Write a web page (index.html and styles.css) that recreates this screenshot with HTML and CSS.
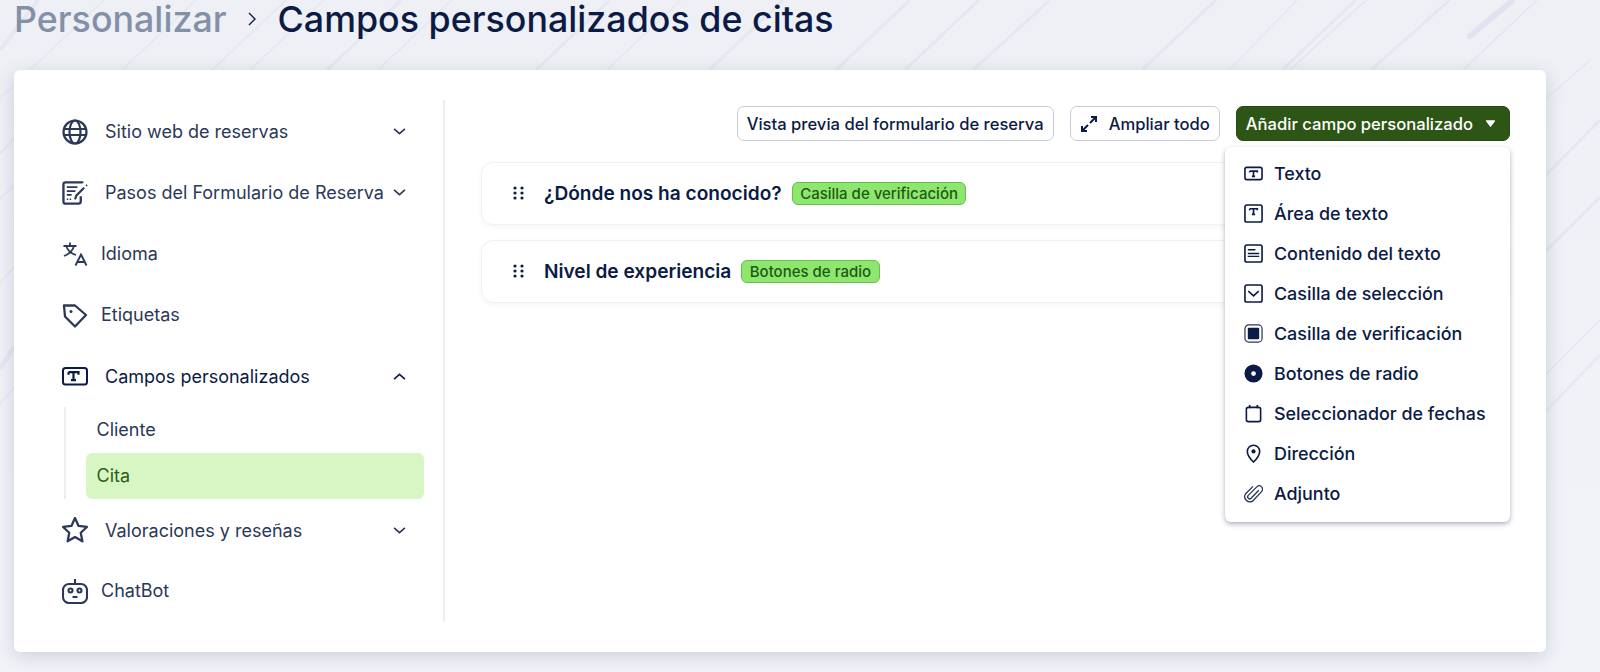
FILE: index.html
```html
<!doctype html>
<html lang="es">
<head>
    <meta charset="UTF-8">
    <title>Campos personalizados de citas</title>
    <link rel="stylesheet" href="styles.css">
</head>
<body>
    <!-- fondo con rayas diagonales -->
    <svg class="bg-lines" width="1600" height="672" viewBox="0 0 1600 672">
        <g stroke="#e5e8f2" stroke-width="3" fill="none">
            <path d="M104 0L30 70" stroke-width="1.500"/>
            <path d="M196 0L122 70" stroke-width="1.500"/>
            <path d="M286 0L212 70" stroke-width="2"/>
            <path d="M324 0L250 70" stroke-width="1.500"/>
            <path d="M401 0L327 70" stroke-width="3"/>
            <path d="M452 0L378 70" stroke-width="1.500"/>
            <path d="M610 0L536 70" stroke-width="3"/>
            <path d="M681 0L607 70" stroke-width="1.500"/>
            <path d="M783 0L709 70" stroke-width="3"/>
            <path d="M910 0L836 70"/>
            <path d="M979 0L905 70"/>
            <path d="M1050 0L973 70"/>
            <path d="M1216 0L1142 70"/>
            <path d="M1356 0L1282 70"/>
            <path d="M1366 0L1290 70" stroke-width="2"/>
            <path d="M1450 0L1371 70"/>
            <path d="M1297 0L1229 70" stroke-width="1.5"/>
            <path d="M1537 0L1463 70" stroke-width="2"/>
            <path d="M1590 60L1546 99" stroke-width="1.500"/>
            <path d="M1600 120L1546 175" stroke-width="3"/>
            <path d="M1600 197L1546 251" stroke-width="3"/>
            <path d="M1600 320L1546 374" stroke-width="1.500"/>
            <path d="M1600 355L1546 411" stroke-width="2"/>
            <path d="M38 0L0 50" stroke-width="4"/>
            <path d="M14 87L0 97" stroke-width="1.500"/>
            <path d="M14 138L0 154" stroke-width="2"/>
            <path d="M14 185L0 199" stroke-width="1.500"/>
            <path d="M14 267L0 283" stroke-width="1.500"/>
            <path d="M14 347L0 369" stroke-width="5"/>
            <path d="M14 388L0 404" stroke-width="1.500"/>
        </g>
        <path d="M1512 1L1470 36" stroke="#dfe4f0" stroke-width="6" stroke-linecap="round"/>
    </svg>

    <div class="page">
        <h1 class="crumbs">
            <span class="crumb-parent">Personalizar</span>
            <svg class="crumb-sep" width="10" height="16" viewBox="0 0 10 16"><path d="M2 2l6 6-6 6" fill="none" stroke="#0b1b45" stroke-width="1.400"/></svg>
            <span>Campos personalizados de citas</span>
        </h1>

        <div class="panel">
            <nav class="side">
                <div class="side-item">
                    <svg class="ico" viewBox="0 0 26 26"><g fill="none" stroke="#2b3858" stroke-width="2.2"><circle cx="13" cy="13" r="11.5"/><ellipse cx="13" cy="13" rx="5.5" ry="11.5"/><path d="M1.5 10h23M1.5 16h23" stroke-width="1.8"/></g></svg>
                    <span class="side-label">Sitio web de reservas</span>
                    <svg class="chev" viewBox="0 0 12 8"><path d="M1 1.5l5 4.5 5-4.5" fill="none" stroke="#2b3858" stroke-width="1.5"/></svg>
                </div>
                <div class="side-item">
                    <svg class="ico" viewBox="0 0 27 25"><g fill="none" stroke="#2b3858" stroke-width="2.400"><path d="M21 2.500V1.500H3.500Q1.500 1.500 1.500 3.500V21.500Q1.500 23.500 3.500 23.500H17Q19.500 23.500 19.500 21V16"/><path d="M5 6.500h11M5 10.500h9M5 14.500h5" stroke-width="1.800"/><path d="M13.500 19l1.500-4 8-8" stroke-width="2.200"/><path d="M25 5l1-1" stroke-width="2"/><path d="M5 19h5" stroke-dasharray="1.500 1.500" stroke-width="1.500"/></g></svg>
                    <span class="side-label">Pasos del Formulario de Reserva</span>
                    <svg class="chev" viewBox="0 0 12 8"><path d="M1 1.5l5 4.500 5-4.500" fill="none" stroke="#2b3858" stroke-width="1.500"/></svg>
                </div>
                <div class="side-item">
                    <svg class="ico" viewBox="0 0 26 26"><g fill="none" stroke="#2b3858" stroke-width="1.800"><path d="M1.500 5h13M8 1.500V5M12 5Q10 12 2 15M4.500 6Q7 12 14 14"/><path d="M13.500 24.500L19 13.500l5.500 11M15.500 21h7" stroke-width="1.900"/></g></svg>
                    <span class="side-label short">Idioma</span>
                </div>
                <div class="side-item">
                    <svg class="ico" viewBox="0 0 26 26"><g fill="none" stroke="#2b3858" stroke-width="2.300" stroke-linejoin="round"><path d="M2 2.500H13L24 12 13 23.500 3 13.500Z"/></g><circle cx="9" cy="8.500" r="1.500" fill="#2b3858"/></svg>
                    <span class="side-label short">Etiquetas</span>
                </div>
                <div class="side-item open">
                    <svg class="ico" viewBox="0 0 26 19"><rect x="1" y="1" width="24" height="16.500" rx="2.500" fill="none" stroke="#0b1b45" stroke-width="2"/><path d="M6.500 5.200h10v2.500M11.500 5.200v8M9 13.200h5M6.500 5.200v2.500" fill="none" stroke="#0b1b45" stroke-width="2.200"/></svg>
                    <span class="side-label">Campos personalizados</span>
                    <svg class="chev" viewBox="0 0 12 8"><path d="M1 6.500l5-4.500 5 4.500" fill="none" stroke="#0b1b45" stroke-width="1.500"/></svg>
                </div>
                <div class="side-sub">
                    <a class="sub-item">Cliente</a>
                    <a class="sub-item active">Cita</a>
                </div>
                <div class="side-item">
                    <svg class="ico" viewBox="1 1 24 24"><path d="M13 2l3.300 7.300 7.700.9-5.700 5.300 1.500 7.900L13 19.400 6.200 23.400l1.500-7.900L2 10.200l7.700-.9Z" fill="none" stroke="#2b3858" stroke-width="2.100" stroke-linejoin="round"/></svg>
                    <span class="side-label">Valoraciones y reseñas</span>
                    <svg class="chev" viewBox="0 0 12 8"><path d="M1 1.5l5 4.5 5-4.5" fill="none" stroke="#2b3858" stroke-width="1.5"/></svg>
                </div>
                <div class="side-item">
                    <svg class="ico" viewBox="0 0 26 26"><g fill="none" stroke="#2b3858" stroke-width="2.100"><rect x="1" y="6" width="24" height="19" rx="6"/><path d="M13 1v5"/><circle cx="8.500" cy="12.500" r="2"/><circle cx="17.500" cy="12.500" r="2"/><path d="M10.500 19h5"/></g></svg>
                    <span class="side-label short">ChatBot</span>
                </div>
            </nav>

            <main class="content">
                <div class="toolbar">
                    <button class="btn">Vista previa del formulario de reserva</button>
                    <button class="btn btn-expand">
                        <svg width="18" height="18" viewBox="0 0 18 18"><path d="M11 2h5v5M16 2l-6 6M7 16H2v-5M2 16l6-6" fill="none" stroke="#0b1b45" stroke-width="2"/></svg>
                        Ampliar todo
                    </button>
                    <div class="add-wrap">
                        <button class="btn btn-add">
                            Añadir campo personalizado
                            <svg width="11" height="7" viewBox="0 0 12 8"><path d="M1.500 1h9L6 7Z" fill="#fff" stroke="#fff" stroke-width="1.500" stroke-linejoin="round"/></svg>
                        </button>
                        <ul class="menu">
                            <li><svg class="mico" viewBox="0 0 20 20"><rect x="1" y="3.500" width="18" height="13" rx="2" fill="none" stroke="#0b1b45" stroke-width="1.700"/><path d="M6 7.500h8v1.500M10 7.500v5.500M8.300 13h3.400M6 7.500V9" fill="none" stroke="#0b1b45" stroke-width="1.800"/></svg>Texto</li>
                            <li><svg class="mico" viewBox="0 0 20 20"><rect x="1" y="1" width="18" height="18" rx="2" fill="none" stroke="#0b1b45" stroke-width="1.700"/><path d="M6 5h8v1.500M10 5v6M8.300 11h3.400M6 5v1.500" fill="none" stroke="#0b1b45" stroke-width="1.800"/></svg>Área de texto</li>
                            <li><svg class="mico" viewBox="0 0 20 20"><rect x="1" y="1" width="18" height="18" rx="2" fill="none" stroke="#0b1b45" stroke-width="1.700"/><path d="M4 6h8M4 10h12M4 13h12" stroke="#0b1b45" stroke-width="1.500"/></svg>Contenido del texto</li>
                            <li><svg class="mico" viewBox="0 0 20 20"><rect x="1" y="1" width="18" height="18" rx="2" fill="none" stroke="#0b1b45" stroke-width="1.700"/><path d="M4.500 7.500L10 12.500l5.500-5" fill="none" stroke="#0b1b45" stroke-width="1.700"/></svg>Casilla de selección</li>
                            <li><svg class="mico" viewBox="0 0 20 20"><rect x="1" y="1" width="18" height="18" rx="4" fill="none" stroke="#2b3858" stroke-width="1.300"/><rect x="4" y="4" width="12" height="12" rx="1" fill="#0b1b45"/></svg>Casilla de verificación</li>
                            <li><svg class="mico" viewBox="0 0 20 20"><circle cx="10" cy="10" r="9.500" fill="#0b1b45"/><circle cx="10" cy="10" r="2.500" fill="#fff"/></svg>Botones de radio</li>
                            <li><svg class="mico" viewBox="0 0 20 20"><rect x="2.500" y="3.500" width="15" height="15" rx="2" fill="none" stroke="#0b1b45" stroke-width="1.700"/><path d="M6 1v3.500M14 1v3.500" stroke="#0b1b45" stroke-width="1.700"/></svg>Seleccionador de fechas</li>
                            <li><svg class="mico" viewBox="0 0 20 20"><path d="M10 19Q3.500 12.500 3.500 7.800a6.500 6.500 0 0 1 13 0Q16.500 12.500 10 19Z" fill="none" stroke="#0b1b45" stroke-width="1.700"/><circle cx="10" cy="7.800" r="2.200" fill="#0b1b45"/></svg>Dirección</li>
                            <li><svg class="mico" viewBox="0 0 20 20"><path d="M15.500 6.500L7.500 15a2 2 0 0 1-3-3L13.500 3a3.500 3.500 0 0 1 5 5L9 18a5.500 5.500 0 0 1-7.500-7.500L9.500 2.500" fill="none" stroke="#2b3858" stroke-width="1.400"/></svg>Adjunto</li>
                        </ul>
                    </div>
                </div>

                <div class="field">
                    <svg class="drag" width="11" height="14" viewBox="0 0 11 14"><g fill="#0b1b45"><circle cx="2" cy="2" r="1.600"/><circle cx="9" cy="2" r="1.600"/><circle cx="2" cy="7" r="1.600"/><circle cx="9" cy="7" r="1.600"/><circle cx="2" cy="12" r="1.600"/><circle cx="9" cy="12" r="1.600"/></g></svg>
                    <span class="field-name">¿Dónde nos ha conocido?</span>
                    <span class="tag">Casilla de verificación</span>
                </div>
                <div class="field">
                    <svg class="drag" width="11" height="14" viewBox="0 0 11 14"><g fill="#0b1b45"><circle cx="2" cy="2" r="1.600"/><circle cx="9" cy="2" r="1.600"/><circle cx="2" cy="7" r="1.600"/><circle cx="9" cy="7" r="1.600"/><circle cx="2" cy="12" r="1.600"/><circle cx="9" cy="12" r="1.600"/></g></svg>
                    <span class="field-name">Nivel de experiencia</span>
                    <span class="tag">Botones de radio</span>
                </div>
            </main>
        </div>
    </div>
</body>
</html>
```

FILE: styles.css
```css
* {
    margin: 0;
    padding: 0;
    box-sizing: border-box;
}
html, body {
    height: 672px;
    overflow: hidden;
}
body {
    background: linear-gradient(#eef0f5, #f1f3f8);
    font-family: "Inter", "Liberation Sans", sans-serif;
    color: #0b1b45;
    position: relative;
}
.bg-lines {
    position: absolute;
    left: 0;
    top: 0;
}
.page {
    position: relative;
    padding: 0 54px 0 14px;
}

/* titulo */
.crumbs {
    display: flex;
    align-items: center;
    height: 38px;
    font-size: 35.8px;
    line-height: 38px;
    font-weight: 500;
    white-space: nowrap;
}
.crumb-parent {
    color: #8390a8;
}
.crumb-sep {
    margin: 0 21px 0 20px;
}

/* panel blanco */
.panel {
    display: flex;
    margin-top: 32px;
    height: 582px;
    padding-top: 30px;
    background: #fff;
    border-radius: 6px;
    box-shadow: 0 4px 18px rgba(60, 70, 110, .2);
}

/* menu lateral */
.side {
    width: 431px;
    height: 522px;
    padding: 1px 19px 0 48px;
    border-right: 2px solid #eceef3;
    flex-shrink: 0;
}
.side-item {
    display: flex;
    align-items: center;
    height: 61.3px;
    color: #2b3858;
    font-size: 18px;
}
.side-item.open {
    color: #0b1b45;
}
.ico {
    width: 26px;
    height: 26px;
    flex-shrink: 0;
}
.side-item.open .ico {
    height: 19px;
}
.side-label {
    margin-left: 17px;
    flex: 1;
    white-space: nowrap;
}
.side-label.short {
    margin-left: 13px;
    padding-bottom: 2px;
}
.chev {
    width: 13px;
    height: 9px;
    margin-right: 18px;
    flex-shrink: 0;
}
.side-sub {
    margin-left: 2px;
    padding-left: 20px;
    border-left: 2px solid #eceef3;
}
.sub-item {
    display: block;
    height: 46px;
    line-height: 46px;
    padding-left: 10.5px;
    border-radius: 6px;
    font-size: 18px;
    color: #2b3858;
}
.sub-item.active {
    background: #d8f6c4;
    color: #2d5f16;
}

/* contenido */
.content {
    flex: 1;
    padding: 6px 36px 0;
}
.toolbar {
    display: flex;
    justify-content: flex-end;
    gap: 16px;
    margin-bottom: 21px;
}
.btn {
    display: flex;
    align-items: center;
    gap: 9px;
    height: 35px;
    padding: 0 9px;
    background: #fff;
    border: 1px solid #c9ccd9;
    border-radius: 7px;
    font-family: inherit;
    font-size: 16.6px;
    font-weight: 500;
    color: #0b1b45;
    white-space: nowrap;
}
.btn-expand {
    gap: 11px;
}
.btn-add {
    gap: 12px;
    padding: 0 13px 0 9px;
    background: #2d5516;
    border-color: #274a13;
    color: #fff;
}
.add-wrap {
    position: relative;
}
.menu {
    position: absolute;
    top: 41px;
    right: 0;
    width: 285px;
    padding: 6px 0 9px;
    background: #fff;
    border-radius: 6px;
    box-shadow: 0 2px 5px rgba(40, 50, 90, .38);
    list-style: none;
    z-index: 5;
}
.menu li {
    display: flex;
    align-items: center;
    gap: 11px;
    height: 40px;
    padding-left: 19px;
    font-size: 17.9px;
    font-weight: 500;
    color: #0b1b45;
    white-space: nowrap;
}
.mico {
    width: 19px;
    height: 19px;
    flex-shrink: 0;
}

/* campos */
.field {
    display: flex;
    align-items: center;
    height: 62.5px;
    margin-bottom: 15.5px;
    padding-left: 31px;
    border: 1px solid #f0f1f5;
    border-radius: 12px;
    box-shadow: 0 2px 5px rgba(60, 70, 110, .05);
}
.drag {
    flex-shrink: 0;
    margin-right: 20px;
}
.field-name {
    font-size: 19.1px;
    font-weight: 600;
    white-space: nowrap;
}
.tag {
    margin-left: 10px;
    padding: 0 7.5px;
    height: 23px;
    line-height: 21px;
    background: #8ee66f;
    border: 1px solid #62c24c;
    border-radius: 6px;
    font-size: 15px;
    font-weight: 500;
    color: #1e5a12;
    white-space: nowrap;
}
```
